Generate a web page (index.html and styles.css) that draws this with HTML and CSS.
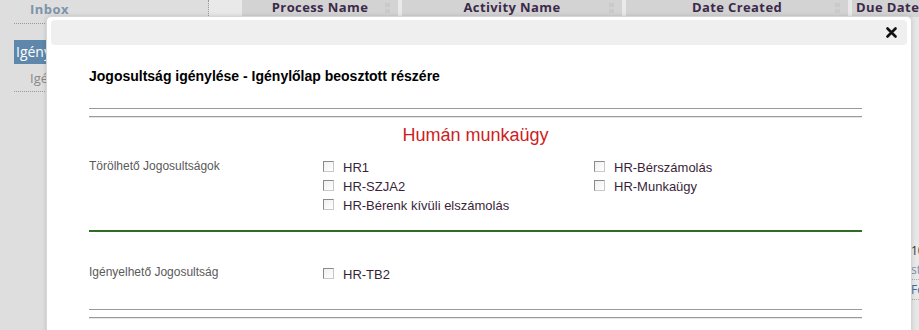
FILE: index.html
```html
<!DOCTYPE html>
<html lang="hu">
<head>
  <meta charset="UTF-8">
  <title>Jogosultság igénylése</title>
  <link rel="stylesheet" href="styles.css">
</head>
<body>
<div class="app">
  <aside class="sidebar">
    <div class="side-head">Inbox</div>
    <div class="side-active">Igények</div>
    <div class="side-link">Igényeim</div>
  </aside>
  <main class="main">
    <div class="grid-head">
      <div class="th th-check"></div>
      <div class="th th-process">Process Name<span class="sort"></span></div>
      <div class="th th-activity">Activity Name<span class="sort"></span></div>
      <div class="th th-created">Date Created<span class="sort"></span></div>
      <div class="th th-due">Due Date</div>
    </div>
    <div class="peek">
      <div class="peek-date">10/10/2013</div>
      <div class="peek-link">status</div>
      <div class="peek-blue">Folyamat</div>
    </div>
  </main>
</div>

<div class="modal">
  <div class="modal-bar">
    <button class="modal-close" title="Bezárás">
      <svg width="11" height="11" viewBox="0 0 11 11"><path d="M1.5 1.5 L9.5 9.5 M9.5 1.5 L1.5 9.5" stroke="#111" stroke-width="2.6" stroke-linecap="round"/></svg>
    </button>
  </div>
  <div class="modal-body">
    <h1 class="form-title">Jogosultság igénylése - Igénylőlap beosztott részére</h1>
    <div class="double-rule"></div>
    <h2 class="section-title">Humán munkaügy</h2>

    <div class="form-row">
      <div class="row-label">Törölhető Jogosultságok</div>
      <div class="opt-col">
        <label class="opt"><span class="box"></span>HR1</label>
        <label class="opt"><span class="box"></span>HR-SZJA2</label>
        <label class="opt"><span class="box"></span>HR-Bérenk kívüli elszámolás</label>
      </div>
      <div class="opt-col">
        <label class="opt"><span class="box"></span>HR-Bérszámolás</label>
        <label class="opt"><span class="box"></span>HR-Munkaügy</label>
      </div>
    </div>

    <div class="green-rule"></div>

    <div class="form-row row-request">
      <div class="row-label">Igényelhető Jogosultság</div>
      <div class="opt-col">
        <label class="opt"><span class="box"></span>HR-TB2</label>
      </div>
    </div>

    <div class="double-rule"></div>
  </div>
</div>
</body>
</html>
```

FILE: styles.css
```css
* {
  margin: 0;
  padding: 0;
  box-sizing: border-box;
}

html, body {
  width: 919px;
  height: 330px;
  overflow: hidden;
}

body {
  background: #e7e7e7;
  font-family: "Open Sans", sans-serif;
}

.app {
  display: flex;
  height: 330px;
}

.sidebar {
  width: 209px;
  flex: none;
  background: #dedede;
}

.side-head {
  margin-left: 14px;
  padding-left: 16px;
  height: 24px;
  line-height: 18px;
  font-size: 13px;
  font-weight: bold;
  color: #7d93ab;
  letter-spacing: 0.5px;
  border-bottom: 1px dotted #999;
  border-right: 1px dotted #999;
}

.side-active {
  margin: 16px 0 0 14px;
  height: 24px;
  line-height: 24px;
  padding-left: 2px;
  background: #5e87ab;
  color: #fff;
  font-size: 14px;
}

.side-link {
  margin-left: 14px;
  padding-left: 16px;
  height: 28px;
  line-height: 28px;
  font-size: 13px;
  color: #888;
  border-bottom: 1px dotted #999;
}

.main {
  flex: 1;
  display: flex;
  flex-direction: column;
}

.grid-head {
  display: flex;
  gap: 4px;
  height: 17px;
  background: #e9e9e9;
}

.th {
  position: relative;
  background: #d3d3d3;
  color: #3b2a4a;
  font-size: 13px;
  font-weight: bold;
  letter-spacing: 0.4px;
  line-height: 15px;
  text-align: center;
}

.th-check { width: 29px; background: #e9e9e9; }
.th-process { width: 156px; }
.th-activity { width: 220px; }
.th-created { width: 222px; }
.th-due { flex: 1; text-align: left; padding-left: 4px; }

.sort {
  position: absolute;
  right: 8px;
  top: 3px;
  width: 5px;
  height: 10px;
  border-top: 4px solid #c9c9c9;
  border-bottom: 4px solid #c9c9c9;
  opacity: 0.8;
}

.peek {
  margin: 224px 0 0 702px;
  font-size: 12px;
  line-height: 19px;
  background: #e9e9e9;
}

.peek-date { color: #333; }
.peek-link { color: #7d93ab; border-bottom: 1px dotted #aaa; }
.peek-blue { color: #3a6ea5; border-bottom: 1px dotted #aaa; }

/* modal window */
.modal {
  position: absolute;
  left: 46px;
  top: 16px;
  width: 866px;
  height: 340px;
  background: #fff;
  border: 1px solid #d6d6d6;
  border-radius: 5px;
  box-shadow: 0 0 4px rgba(0, 0, 0, 0.15);
  padding: 3px 4px;
}

.modal-bar {
  height: 25px;
  background: #efefef;
  border-radius: 4px;
  display: flex;
  justify-content: flex-end;
  align-items: center;
  padding-right: 10px;
}

.modal-close {
  border: none;
  background: none;
  display: flex;
}

.modal-body {
  padding: 0 45px 0 38px;
  font-family: "Liberation Sans", Arial, sans-serif;
}

.form-title {
  margin-top: 22px;
  font-size: 14px;
  line-height: 18px;
  color: #000;
}

.double-rule {
  margin-top: 23px;
  height: 9px;
  border-top: 1px solid #9a9a9a;
  border-bottom: 1px solid #9a9a9a;
  box-shadow: 0 1px 0 #e6e6e6;
}

.section-title {
  margin-top: 7px;
  text-align: center;
  font-size: 18px;
  font-weight: normal;
  line-height: 22px;
  color: #cc1e1e;
}

.form-row {
  display: grid;
  grid-template-columns: 234px 271px 1fr;
  margin-top: 12px;
}

.row-label {
  font-size: 12px;
  color: #5a5a5a;
  line-height: 19px;
  margin-top: -1px;
}

.opt-col {
  display: flex;
  flex-direction: column;
}

.opt {
  display: flex;
  align-items: center;
  height: 19px;
  font-size: 13px;
  color: #3a1f3a;
}

.box {
  width: 11px;
  height: 11px;
  margin: 0 9px 2px 0;
  border: 1px solid #8a8a8a;
  border-right-color: #c8c8c8;
  border-bottom-color: #c8c8c8;
  background: linear-gradient(135deg, #f0f0f0, #fff);
}

.green-rule {
  margin-top: 15px;
  height: 2px;
  background: #2e6e22;
}

.row-request {
  margin-top: 33px;
}

.row-request .row-label {
  margin-top: -2px;
}

.row-request + .double-rule {
  margin-top: 25px;
}
```
